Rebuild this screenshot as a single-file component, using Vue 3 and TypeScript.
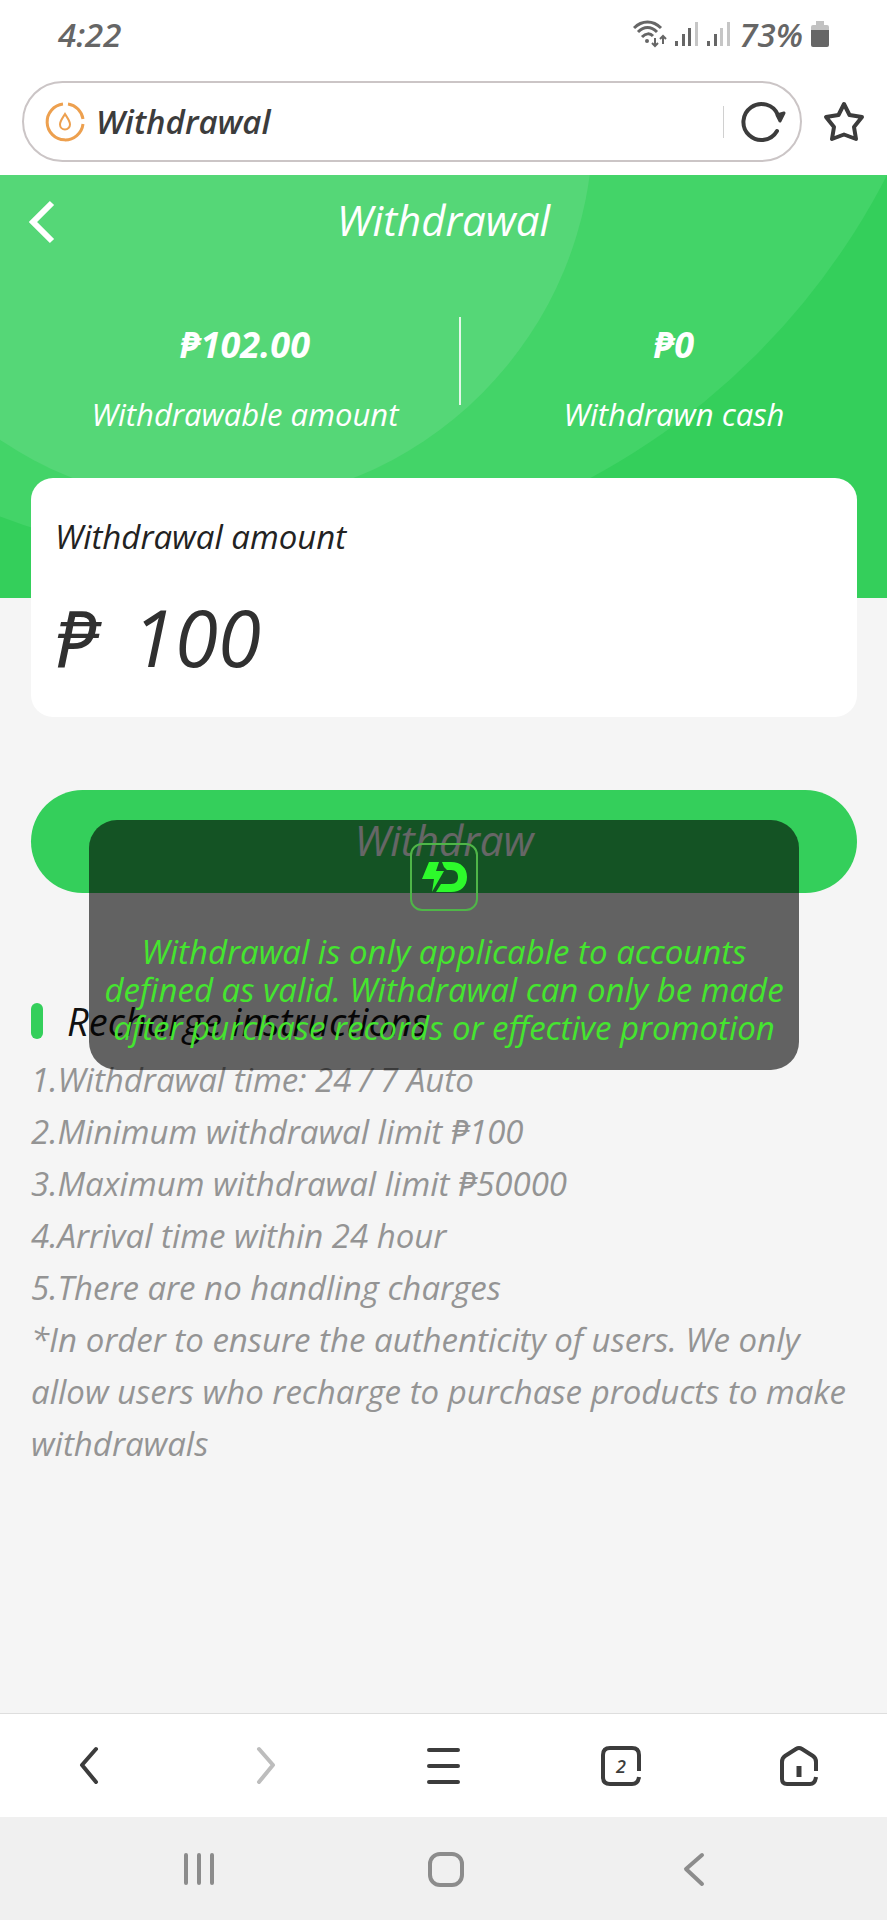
<script setup lang="ts">
import { ref } from 'vue'

interface Stat {
  value: string
  label: string
}

const stats: Stat[] = [
  { value: '₱102.00', label: 'Withdrawable amount' },
  { value: '₱0', label: 'Withdrawn cash' },
]

const amount = ref('100')

const instructions: string[] = [
  '1.Withdrawal time: 24 / 7 Auto',
  '2.Minimum withdrawal limit ₱100',
  '3.Maximum withdrawal limit ₱50000',
  '4.Arrival time within 24 hour',
  '5.There are no handling charges',
  '*In order to ensure the authenticity of users. We only allow users who recharge to purchase products to make withdrawals',
]
</script>

<template>
  <div class="screen">
    <div class="status">
      <span class="clock">4:22</span>
      <div class="indicators">
        <svg class="wifi" width="34" height="28" viewBox="0 0 34 28" fill="none" stroke="#666" stroke-width="3">
          <path d="M1 8C9 0 20 0 28 8" />
          <path d="M5 12C11 6 18 6 24 12" />
          <path d="M9 17C13 13 17 13 20 16" />
          <circle cx="14" cy="21" r="2" fill="#666" stroke="none" />
          <path d="M22 18V26M19 23L22 26L25 23M30 24V16M27 19L30 16L33 19" stroke-width="2" />
        </svg>
        <svg width="24" height="26" viewBox="0 0 24 26" fill="#666">
          <rect x="0" y="20" width="3" height="5" />
          <rect x="7" y="13" width="3" height="12" />
          <rect x="13" y="7" width="3" height="18" />
          <rect x="20" y="1" width="3" height="24" fill="#c6c6c6" />
        </svg>
        <svg width="24" height="26" viewBox="0 0 24 26" fill="#666">
          <rect x="0" y="20" width="3" height="5" />
          <rect x="7" y="13" width="3" height="12" />
          <rect x="13" y="7" width="3" height="18" fill="#c6c6c6" />
          <rect x="20" y="1" width="3" height="24" fill="#c6c6c6" />
        </svg>
        <span class="percent">73%</span>
        <svg width="18" height="28" viewBox="0 0 18 28">
          <path d="M5 1H13V5H16Q18 5 18 7V10H0V7Q0 5 2 5H5Z" fill="#c2c2c2" />
          <path d="M0 10H18V25Q18 27 16 27H2Q0 27 0 25Z" fill="#666" />
        </svg>
      </div>
    </div>

    <div class="browser-bar">
      <div class="address">
        <svg width="42" height="42" viewBox="0 0 42 42" fill="none" stroke="#eda04f" stroke-width="3">
          <path d="M19 3A18 18 0 1 0 39 23" />
          <path d="M24 3A18 18 0 0 1 39 18" />
          <path d="M21 13C18 18 16 20 16 23.500A5 5 0 0 0 26 23.500C26 20 24 18 21 13Z" stroke-width="2" />
        </svg>
        <span class="address-text">Withdrawal</span>
        <span class="separator"></span>
        <button class="icon-button" type="button" aria-label="Reload">
          <svg width="46" height="42" viewBox="0 0 46 42" fill="none" stroke="#3c3c3c" stroke-width="4" stroke-linecap="round" stroke-linejoin="round">
            <path d="M37 30A18 18 0 1 1 38 14" />
            <path d="M37 14L44 12L40 20Z" fill="#3c3c3c" stroke-width="3" />
          </svg>
        </button>
      </div>
      <button class="icon-button" type="button" aria-label="Bookmark">
        <svg width="42" height="42" viewBox="0 0 42 42" fill="none" stroke="#3c3c3c" stroke-width="4" stroke-linejoin="round">
          <path d="M21 3L26.500 14L39 16L31 26L33 38L21 33.500L9 38L11 26L3 16L15.500 14Z" />
        </svg>
      </button>
    </div>

    <header class="hero">
      <svg class="hero-art" viewBox="0 0 887 423" preserveAspectRatio="none" aria-hidden="true">
        <circle cx="253" cy="-324" r="712" fill="#43d468" />
        <circle cx="213" cy="-50" r="380" fill="#55d777" />
      </svg>
      <div class="title-bar">
        <button class="icon-button back" type="button" aria-label="Back">
          <svg width="26" height="44" viewBox="0 0 26 44" fill="none" stroke="#fff" stroke-width="6">
            <path d="M23 3L4 22L23 41" />
          </svg>
        </button>
        <h1>Withdrawal</h1>
      </div>
      <dl class="stats">
        <div v-for="stat in stats" :key="stat.label" class="stat">
          <dd>{{ stat.value }}</dd>
          <dt>{{ stat.label }}</dt>
        </div>
      </dl>
    </header>

    <main class="content">
      <section class="card">
        <label for="amount">Withdrawal amount</label>
        <div class="amount-row">
          <span class="currency">₱</span>
          <input id="amount" v-model="amount" type="text" inputmode="decimal" />
        </div>
      </section>

      <div class="actions">
        <button class="withdraw" type="button">Withdraw</button>
        <div class="toast" role="status">
          <svg width="68" height="68" viewBox="0 0 68 68" fill="none">
            <rect x="1" y="1" width="66" height="66" rx="11" stroke="#4fb648" stroke-width="2" />
            <path d="M19 19H29L26 28H34L22 49L24 36H12Z" fill="#2dfa2b" />
            <path d="M32 19H41C51 19 57 25 57 34C57 43 51 49 41 49H26L31 41H41C46 41 48 38 48 34C48 30 46 27 41 27H37L34 24Z" fill="#2dfa2b" />
          </svg>
          <p>Withdrawal is only applicable to accounts defined as valid. Withdrawal can only be made after purchase records or effective promotion</p>
        </div>
      </div>

      <section class="instructions">
        <h2>Recharge instructions</h2>
        <p v-for="line in instructions" :key="line">{{ line }}</p>
      </section>
    </main>

    <nav class="browser-nav" aria-label="Browser">
      <button type="button" aria-label="Previous page">
        <svg width="40" height="42" viewBox="0 0 40 42" fill="none" stroke="#3c3c3c" stroke-width="4" stroke-linecap="round" stroke-linejoin="round">
          <path d="M27 4L13 20L27 37" />
        </svg>
      </button>
      <button type="button" aria-label="Next page">
        <svg width="40" height="42" viewBox="0 0 40 42" fill="none" stroke="#bdbdbd" stroke-width="4" stroke-linecap="round" stroke-linejoin="round">
          <path d="M13 4L27 20L13 37" />
        </svg>
      </button>
      <button type="button" aria-label="Menu">
        <svg width="40" height="42" viewBox="0 0 40 42" fill="none" stroke="#3c3c3c" stroke-width="4" stroke-linecap="round">
          <path d="M5 5H34M5 21H34M5 37H34" />
        </svg>
      </button>
      <button type="button" aria-label="Tabs">
        <svg width="40" height="42" viewBox="0 0 40 42" fill="none" stroke="#3c3c3c" stroke-width="4">
          <path d="M38 26V10Q38 3 31 3H9Q2 3 2 10V32Q2 39 9 39H31Q37 39 38 32" />
        </svg>
        <span class="tab-count">2</span>
      </button>
      <button type="button" aria-label="Home">
        <svg width="40" height="42" viewBox="0 0 40 42" fill="none" stroke="#3c3c3c" stroke-width="4" stroke-linejoin="round">
          <path d="M38 26V17Q38 13 35 11L24 4Q21 2 18 4L7 11Q4 13 4 17V34Q4 39 9 39H32Q37 39 38 32" />
          <path d="M21 21V32" stroke-width="5" />
        </svg>
      </button>
    </nav>

    <nav class="system-nav" aria-label="System">
      <button type="button" aria-label="Recent apps">
        <svg width="36" height="36" viewBox="0 0 36 36" fill="none" stroke="#8c8c8c" stroke-width="4" stroke-linecap="round">
          <path d="M5 4V32M18 4V32M31 4V32" />
        </svg>
      </button>
      <button type="button" aria-label="Home screen">
        <svg width="36" height="36" viewBox="0 0 36 36" fill="none" stroke="#8c8c8c" stroke-width="4">
          <rect x="2" y="3" width="32" height="31" rx="10" />
        </svg>
      </button>
      <button type="button" aria-label="Go back">
        <svg width="36" height="36" viewBox="0 0 36 36" fill="none" stroke="#8c8c8c" stroke-width="4" stroke-linecap="round" stroke-linejoin="round">
          <path d="M27 4L11 18L27 33" />
        </svg>
      </button>
    </nav>
  </div>
</template>

<style>
body {
  margin: 0;
  background: #f5f5f5;
}
</style>

<style scoped>
.screen {
  display: flex;
  flex-direction: column;
  min-height: 100vh;
  background: #f5f5f5;
  color: #222;
  font-family: 'Open Sans', 'Noto Sans', sans-serif;
  font-style: italic;
  font-size: 33px;
}

button,
input {
  margin: 0;
  padding: 0;
  border: 0;
  background: none;
  color: inherit;
  font: inherit;
}

svg {
  display: block;
}

h1,
h2,
p,
dl,
dd {
  margin: 0;
  font-weight: 400;
}

.status {
  display: flex;
  align-items: center;
  justify-content: space-between;
  height: 68px;
  padding: 0 58px;
  background: #fff;
  color: #666;
  font-weight: 600;
}

.indicators {
  display: flex;
  align-items: center;
  gap: 8px;
}

.browser-bar {
  display: flex;
  align-items: center;
  gap: 21px;
  padding: 13px 22px;
  background: #fff;
}

.address {
  display: flex;
  flex: 1;
  align-items: center;
  gap: 10px;
  box-sizing: border-box;
  height: 81px;
  padding: 0 14px 0 20px;
  border: 2px solid #cbc5c6;
  border-radius: 41px;
}

.address-text {
  flex: 1;
  color: #3c3c3c;
  font-weight: 600;
}

.separator {
  width: 1px;
  height: 32px;
  margin-right: 6px;
  background: #d0d0d0;
}

.hero {
  position: relative;
  height: 423px;
  background: #34cf5b;
  color: #fff;
}

.hero-art {
  position: absolute;
  inset: 0;
  width: 100%;
  height: 100%;
}

.title-bar {
  display: grid;
  grid-template-columns: 60px 1fr 60px;
  align-items: center;
  position: relative;
  height: 94px;
}

.back {
  justify-self: end;
  padding-right: 5px;
}

h1 {
  font-size: 42px;
  line-height: 48px;
  padding-bottom: 4px;
  text-align: center;
}

.stats {
  display: grid;
  grid-template-columns: 1fr 1fr;
  position: relative;
  padding: 48px 0 0 31px;
}

.stat {
  display: flex;
  flex-direction: column;
  align-items: center;
  height: 88px;
  font-size: 31px;
}

.stat + .stat {
  border-left: 2px solid #e3f8e8;
}

.stat dd {
  font-size: 36px;
  font-weight: 700;
  line-height: 56px;
}

.stat dt {
  margin-top: 19px;
  line-height: 44px;
}

.content {
  flex: 1;
  margin-top: -120px;
  padding: 0 30px 0 31px;
}

.card {
  position: relative;
  padding: 34px 24px 6px;
  border-radius: 22px;
  background: #fff;
}

.card label {
  display: block;
  line-height: 50px;
}

.amount-row {
  display: flex;
  align-items: center;
  gap: 34px;
  height: 149px;
  color: #303030;
  font-size: 78px;
}

.amount-row input {
  flex: 1;
  min-width: 0;
}

.actions {
  position: relative;
  margin-top: 73px;
}

.withdraw {
  display: block;
  width: 100%;
  height: 103px;
  padding-bottom: 4px;
  border-radius: 52px;
  background: #34cf5b;
  color: #fff;
  font-size: 42px;
}

.toast {
  display: flex;
  flex-direction: column;
  align-items: center;
  gap: 22px;
  position: absolute;
  top: 30px;
  left: 7%;
  right: 7%;
  padding: 23px 4px;
  border-radius: 28px;
  background: rgba(0, 0, 0, 0.6);
  color: #45e52f;
  line-height: 38px;
  text-align: center;
}

.instructions {
  margin-top: 102px;
  color: #949494;
  line-height: 52px;
}

.instructions h2 {
  display: flex;
  align-items: center;
  gap: 24px;
  padding-bottom: 7px;
  color: #111;
  font-size: 38px;
}

.instructions h2::before {
  content: '';
  width: 12px;
  height: 36px;
  border-radius: 6px;
  background: #34cf5b;
}

.browser-nav,
.system-nav {
  display: flex;
  height: 103px;
}

.browser-nav {
  border-top: 1px solid #dedede;
  background: #fff;
}

.system-nav {
  box-sizing: border-box;
  padding: 0 70px 0 75px;
  background: #f0f0f0;
}

.browser-nav button,
.system-nav button {
  display: grid;
  flex: 1;
  place-items: center;
  place-content: center;
}

.browser-nav svg,
.tab-count {
  grid-area: 1 / 1;
}

.tab-count {
  color: #3c3c3c;
  font-size: 18px;
  font-weight: 600;
}
</style>
